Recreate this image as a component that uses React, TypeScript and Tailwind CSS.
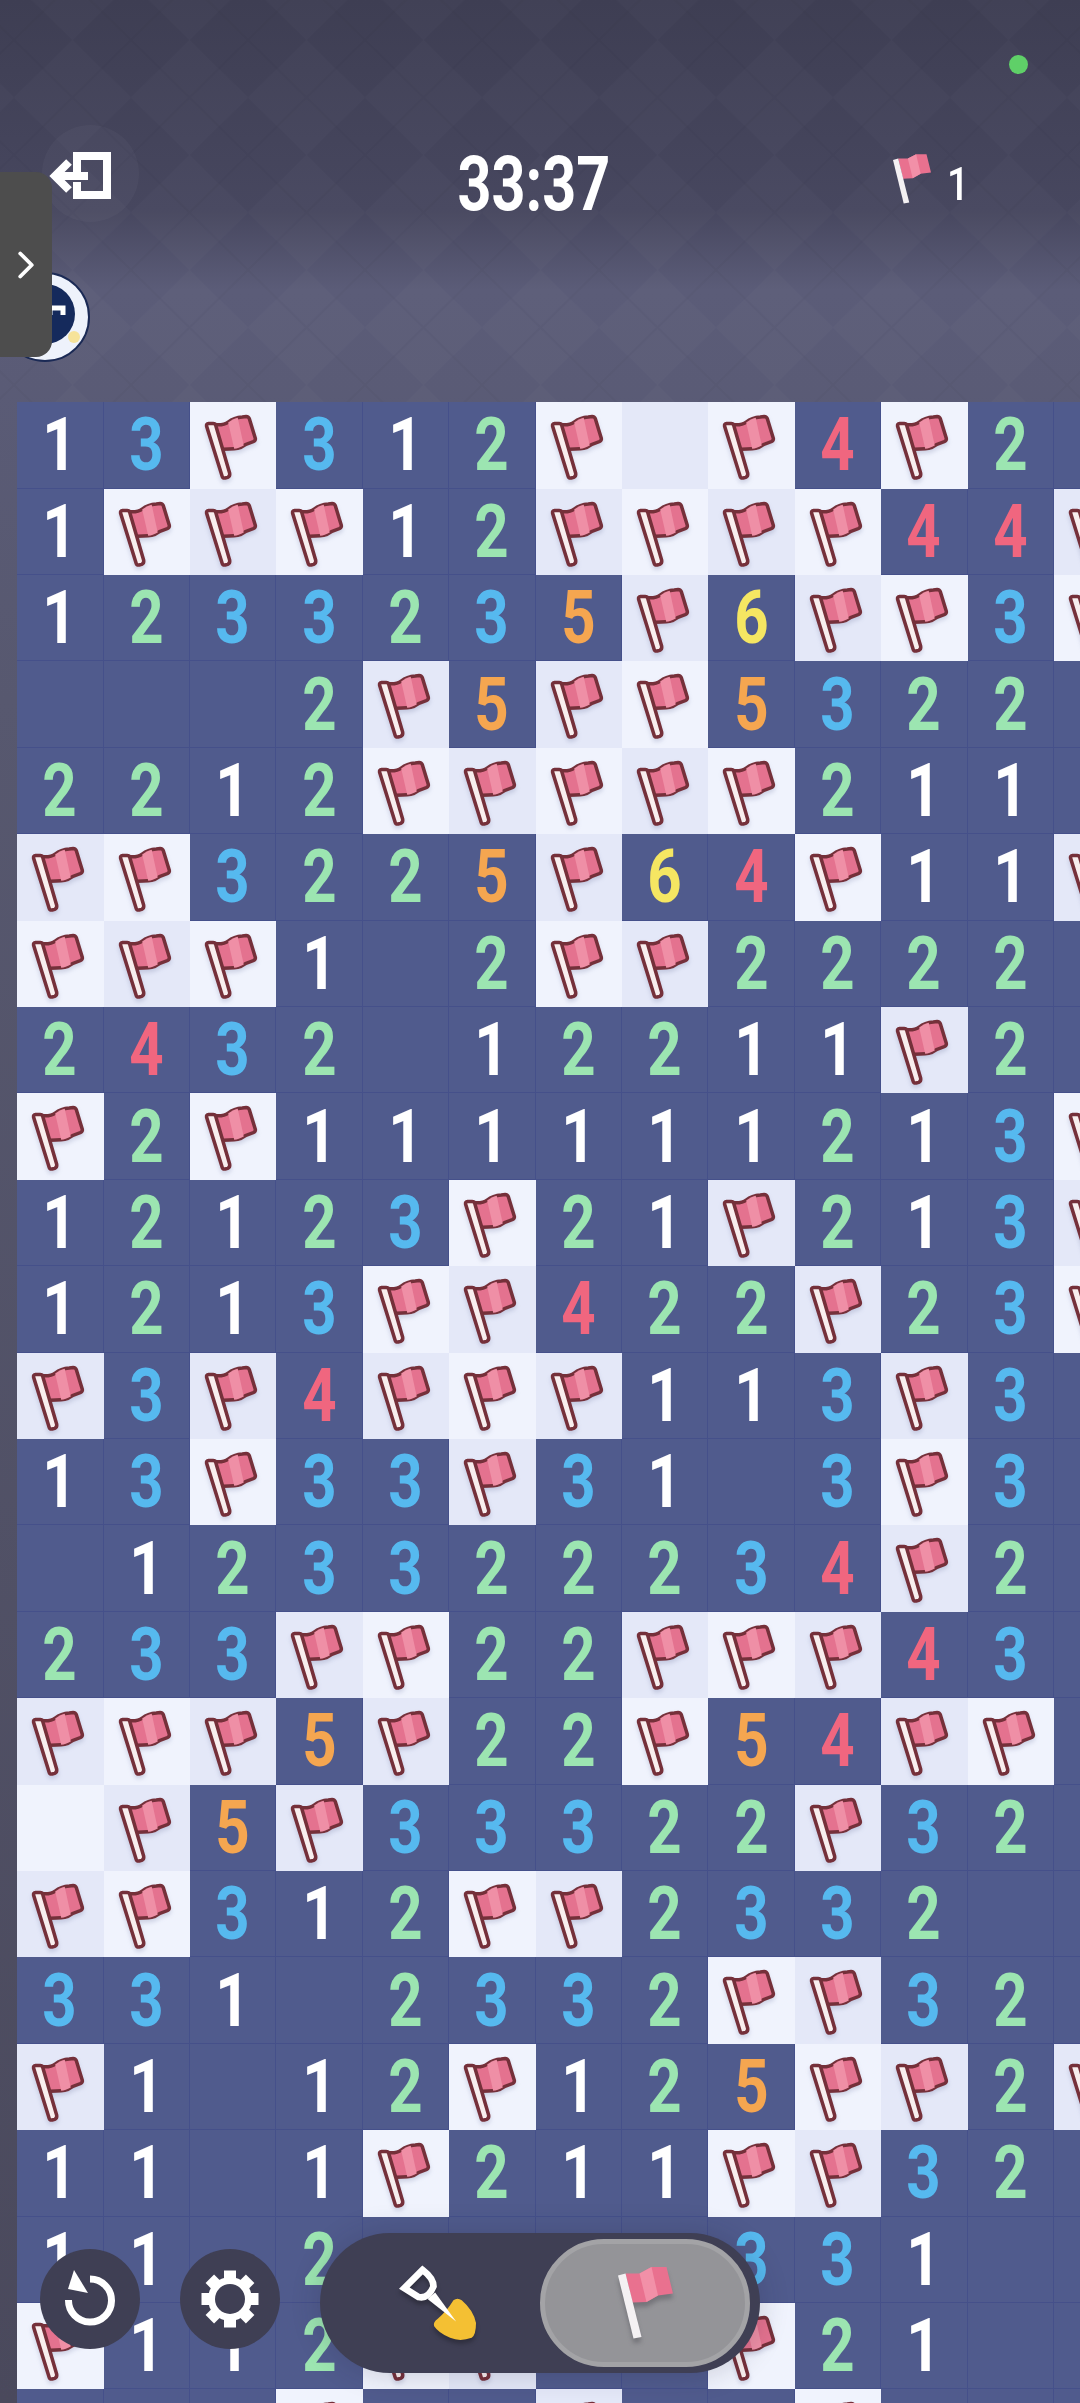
import { ChevronRight } from 'lucide-react';

const board = [
  '13F312FLF4F2.',
  '1FFF12FFFF44F',
  '1233235F6FF3F',
  '...2F5FF5322.',
  '2212FFFFF211.',
  'FF3225F64F11F',
  'FFF1.2FF2222.',
  '2432.12211F2.',
  'F2F111111213F',
  '12123F21F213F',
  '1213FF422F23F',
  'F3F4FFF113F3.',
  '13F33F31.3F3.',
  '.123322234F2.',
  '233FF22FFF43.',
  'FFF5F22F54FF.',
  'LF5F33322F32.',
  'FF312FF2332..',
  '331.2332FF32.',
  'F1.12F125FF2F',
  '11.1F211FF32.',
  '11.2....331..',
  'F112FF22F21..',
  '...F..F..F...',
];

const digitColors: Record<string, string> = {
  '1': 'text-white',
  '2': 'text-[#9ce5b1]',
  '3': 'text-[#56b9ef]',
  '4': 'text-[#f0667f]',
  '5': 'text-[#f5a650]',
  '6': 'text-[#f5e662]',
};

// flag with the dark outline, used on the board
function CellFlag() {
  return (
    <svg viewBox="0 0 86 86" className="w-full h-full drop-shadow-[0_3px_2px_rgba(70,80,130,0.2)]">
      <path
        d="M24 22.5C30 23 35 22.5 38 20C42 17 46 15.5 52 15L56 14.5Q58 14.5 59 16.5L65 36Q65.5 38.5 63 39.5C58 41 54 43 50 45.5C46 47 42 47 33 47L28 47Z"
        fill="#e4728f"
        stroke="#75303a"
        strokeWidth="3.5"
        strokeLinejoin="round"
      />
      <path d="M38 20.5C41 18 44 16.5 47.5 15.6L53.5 43.4C50 45.5 47 46.4 44 46.6Z" fill="#ef8fa6" />
      <path
        d="M16.5 24Q16 21.5 18.5 21.3L23 21.3Q25 21.3 25.5 23L39.5 71Q40 74 37.5 75L35 75.7Q32.5 76 32 74Z"
        fill="#f8eeee"
        stroke="#75303a"
        strokeWidth="3.5"
        strokeLinejoin="round"
      />
    </svg>
  );
}

// flag without outline, header and toggle
function PlainFlag({ className }: { className: string }) {
  return (
    <svg viewBox="0 0 110 144" className={className}>
      <path d="M15 13L43 13L67 0L97 0L110 53L80 57L57 70L29 71Z" fill="#e9718f" />
      <path d="M43 13L67 0L80 57L57 70Z" fill="#f290a8" />
      <path d="M0 17L15 13L47 140L31 143Z" fill="#f4f1f3" />
    </svg>
  );
}

function Cell({ value, odd }: { value: string; odd: boolean }) {
  if (value === 'F' || value === 'L') {
    return <div className={odd ? 'bg-[#e4e8f8]' : 'bg-[#f0f3fd]'}>{value === 'F' && <CellFlag />}</div>;
  }
  return (
    <div className="flex items-center justify-center bg-[#505b8d] border-r border-b border-[#45508a]">
      {value !== '.' && (
        <span className={`scale-x-[0.8] text-[75px] leading-none font-bold ${digitColors[value]}`}>{value}</span>
      )}
    </div>
  );
}

export default function App() {
  return (
    <div className="relative w-[1080px] h-[2403px] overflow-hidden font-['Roboto',sans-serif] bg-[linear-gradient(180deg,#3e3e53_0px,#47475f_210px,#5b5c78_290px,#57586f_700px,#4a495c_2403px)]">
      {/* diamond background */}
      <svg className="absolute top-0 left-0 w-[1080px] h-[402px]">
        <defs>
          <pattern id="argyle" width="117" height="115" patternUnits="userSpaceOnUse" patternTransform="translate(14 40)">
            <path d="M58.5 0L117 57.5L58.5 115L0 57.5Z" fill="rgba(255,255,255,0.015)" />
            <path d="M0 0L117 115M117 0L0 115" stroke="rgba(0,0,0,0.022)" strokeWidth="2" />
          </pattern>
        </defs>
        <rect width="1080" height="402" fill="url(#argyle)" />
      </svg>

      {/* status dot */}
      <div className="absolute left-[1009px] top-[55px] w-[19px] h-[19px] rounded-full bg-[#5fd068]" />

      <div className="relative flex flex-col pt-[125px]">
        {/* header */}
        <div className="flex items-start pl-[42px] h-[98px]">
          <div className="flex items-center justify-center w-[97px] h-[97px] rounded-full bg-white/[0.03]">
            <svg viewBox="0 0 97 97" className="w-[97px] h-[97px]" fill="none" stroke="white" strokeWidth="8">
              <path d="M35 47V31H65V70H35V57" />
              <path d="M46 51H16" />
              <path d="M27 37L13 51L27 65" />
            </svg>
          </div>
          <div className="flex justify-center w-[147px] ml-[321px] mt-[18px]">
            <span className="scale-x-[0.78] text-[76px] leading-[82px] font-bold text-white">33:37</span>
          </div>
          <PlainFlag className="w-[38px] h-[50px] ml-[286px] mt-[29px]" />
          <span className="ml-[14px] mt-[36px] scale-x-[0.85] text-[46px] leading-[46px] font-medium text-white">1</span>
        </div>

        {/* avatar */}
        <svg viewBox="0 0 90 90" className="w-[90px] h-[90px] mt-[49px]">
          <circle cx="45" cy="45" r="44" fill="#eef2fb" stroke="#1b2a55" strokeWidth="2" />
          <circle cx="45" cy="42" r="30" fill="#152a5c" />
          <path d="M50 43V36H63V43" fill="none" stroke="white" strokeWidth="5" />
          <circle cx="74" cy="65" r="6" fill="#f6e39a" />
        </svg>

        {/* board */}
        <div className="grid grid-cols-[repeat(13,86.4px)] auto-rows-[86.4px] w-max ml-[17.3px] mt-[40.3px]">
          {board.map((row, r) =>
            row.split('').map((value, c) => <Cell key={`${r}-${c}`} value={value} odd={(r + c) % 2 === 1} />),
          )}
        </div>
      </div>

      {/* side tab */}
      <div className="absolute left-0 top-[172px] flex items-center justify-center w-[52px] h-[185px] rounded-r-2xl bg-[#4d4d4d] text-white">
        <ChevronRight size={46} strokeWidth={2} />
      </div>

      {/* bottom controls */}
      <div className="absolute left-[40px] top-[2233px] flex items-start">
        <div className="flex items-center justify-center w-[100px] h-[100px] mt-[16px] rounded-full bg-[#3f3f54]">
          <svg viewBox="0 0 100 100" className="w-[100px] h-[100px]">
            <path d="M50 30A21.5 21.5 0 1 1 28.5 51" fill="none" stroke="white" strokeWidth="7" />
            <path d="M34 21L28 40L48 44Z" fill="white" />
          </svg>
        </div>
        <div className="flex items-center justify-center w-[100px] h-[100px] mt-[16px] ml-[40px] rounded-full bg-[#3f3f54]">
          <svg viewBox="0 0 100 100" className="w-[100px] h-[100px]">
            <g fill="white">
              <rect x="44" y="21.5" width="12" height="57" />
              <rect x="44" y="21.5" width="12" height="57" transform="rotate(45 50 50)" />
              <rect x="44" y="21.5" width="12" height="57" transform="rotate(90 50 50)" />
              <rect x="44" y="21.5" width="12" height="57" transform="rotate(135 50 50)" />
              <circle cx="50" cy="50" r="22" />
            </g>
            <circle cx="50" cy="50" r="15" fill="#3f3f54" />
          </svg>
        </div>
        <div className="flex items-center w-[440px] h-[140px] ml-[40px] rounded-full bg-[#3f3f54] shadow-[0_0_30px_rgba(30,30,50,0.2)]">
          <div className="flex flex-1 items-center justify-center pl-[16px]">
            <svg viewBox="170 120 250 240" className="w-[83px] h-[80px] drop-shadow-[0_4px_2px_rgba(0,0,0,0.25)]">
              <path
                d="M340 232Q352 222 365 232Q400 262 408 300Q408 335 395 345Q360 358 330 345Q295 330 282 310Q278 298 292 288Q320 265 340 232Z"
                fill="#f4c033"
              />
              <path d="M247 140L192 195L235 222Q265 228 280 190Q280 165 247 140Z" fill="none" stroke="white" strokeWidth="20" />
              <path d="M262 228L285 208L348 296Z" fill="white" />
            </svg>
          </div>
          <div className="flex items-center justify-center w-[210px] h-[128px] mr-[10px] rounded-full border-[5px] border-[#a3a3a6] bg-[#949498]">
            <PlainFlag className="w-[55px] h-[72px] drop-shadow-[0_5px_2px_rgba(60,60,70,0.35)]" />
          </div>
        </div>
      </div>
    </div>
  );
}
